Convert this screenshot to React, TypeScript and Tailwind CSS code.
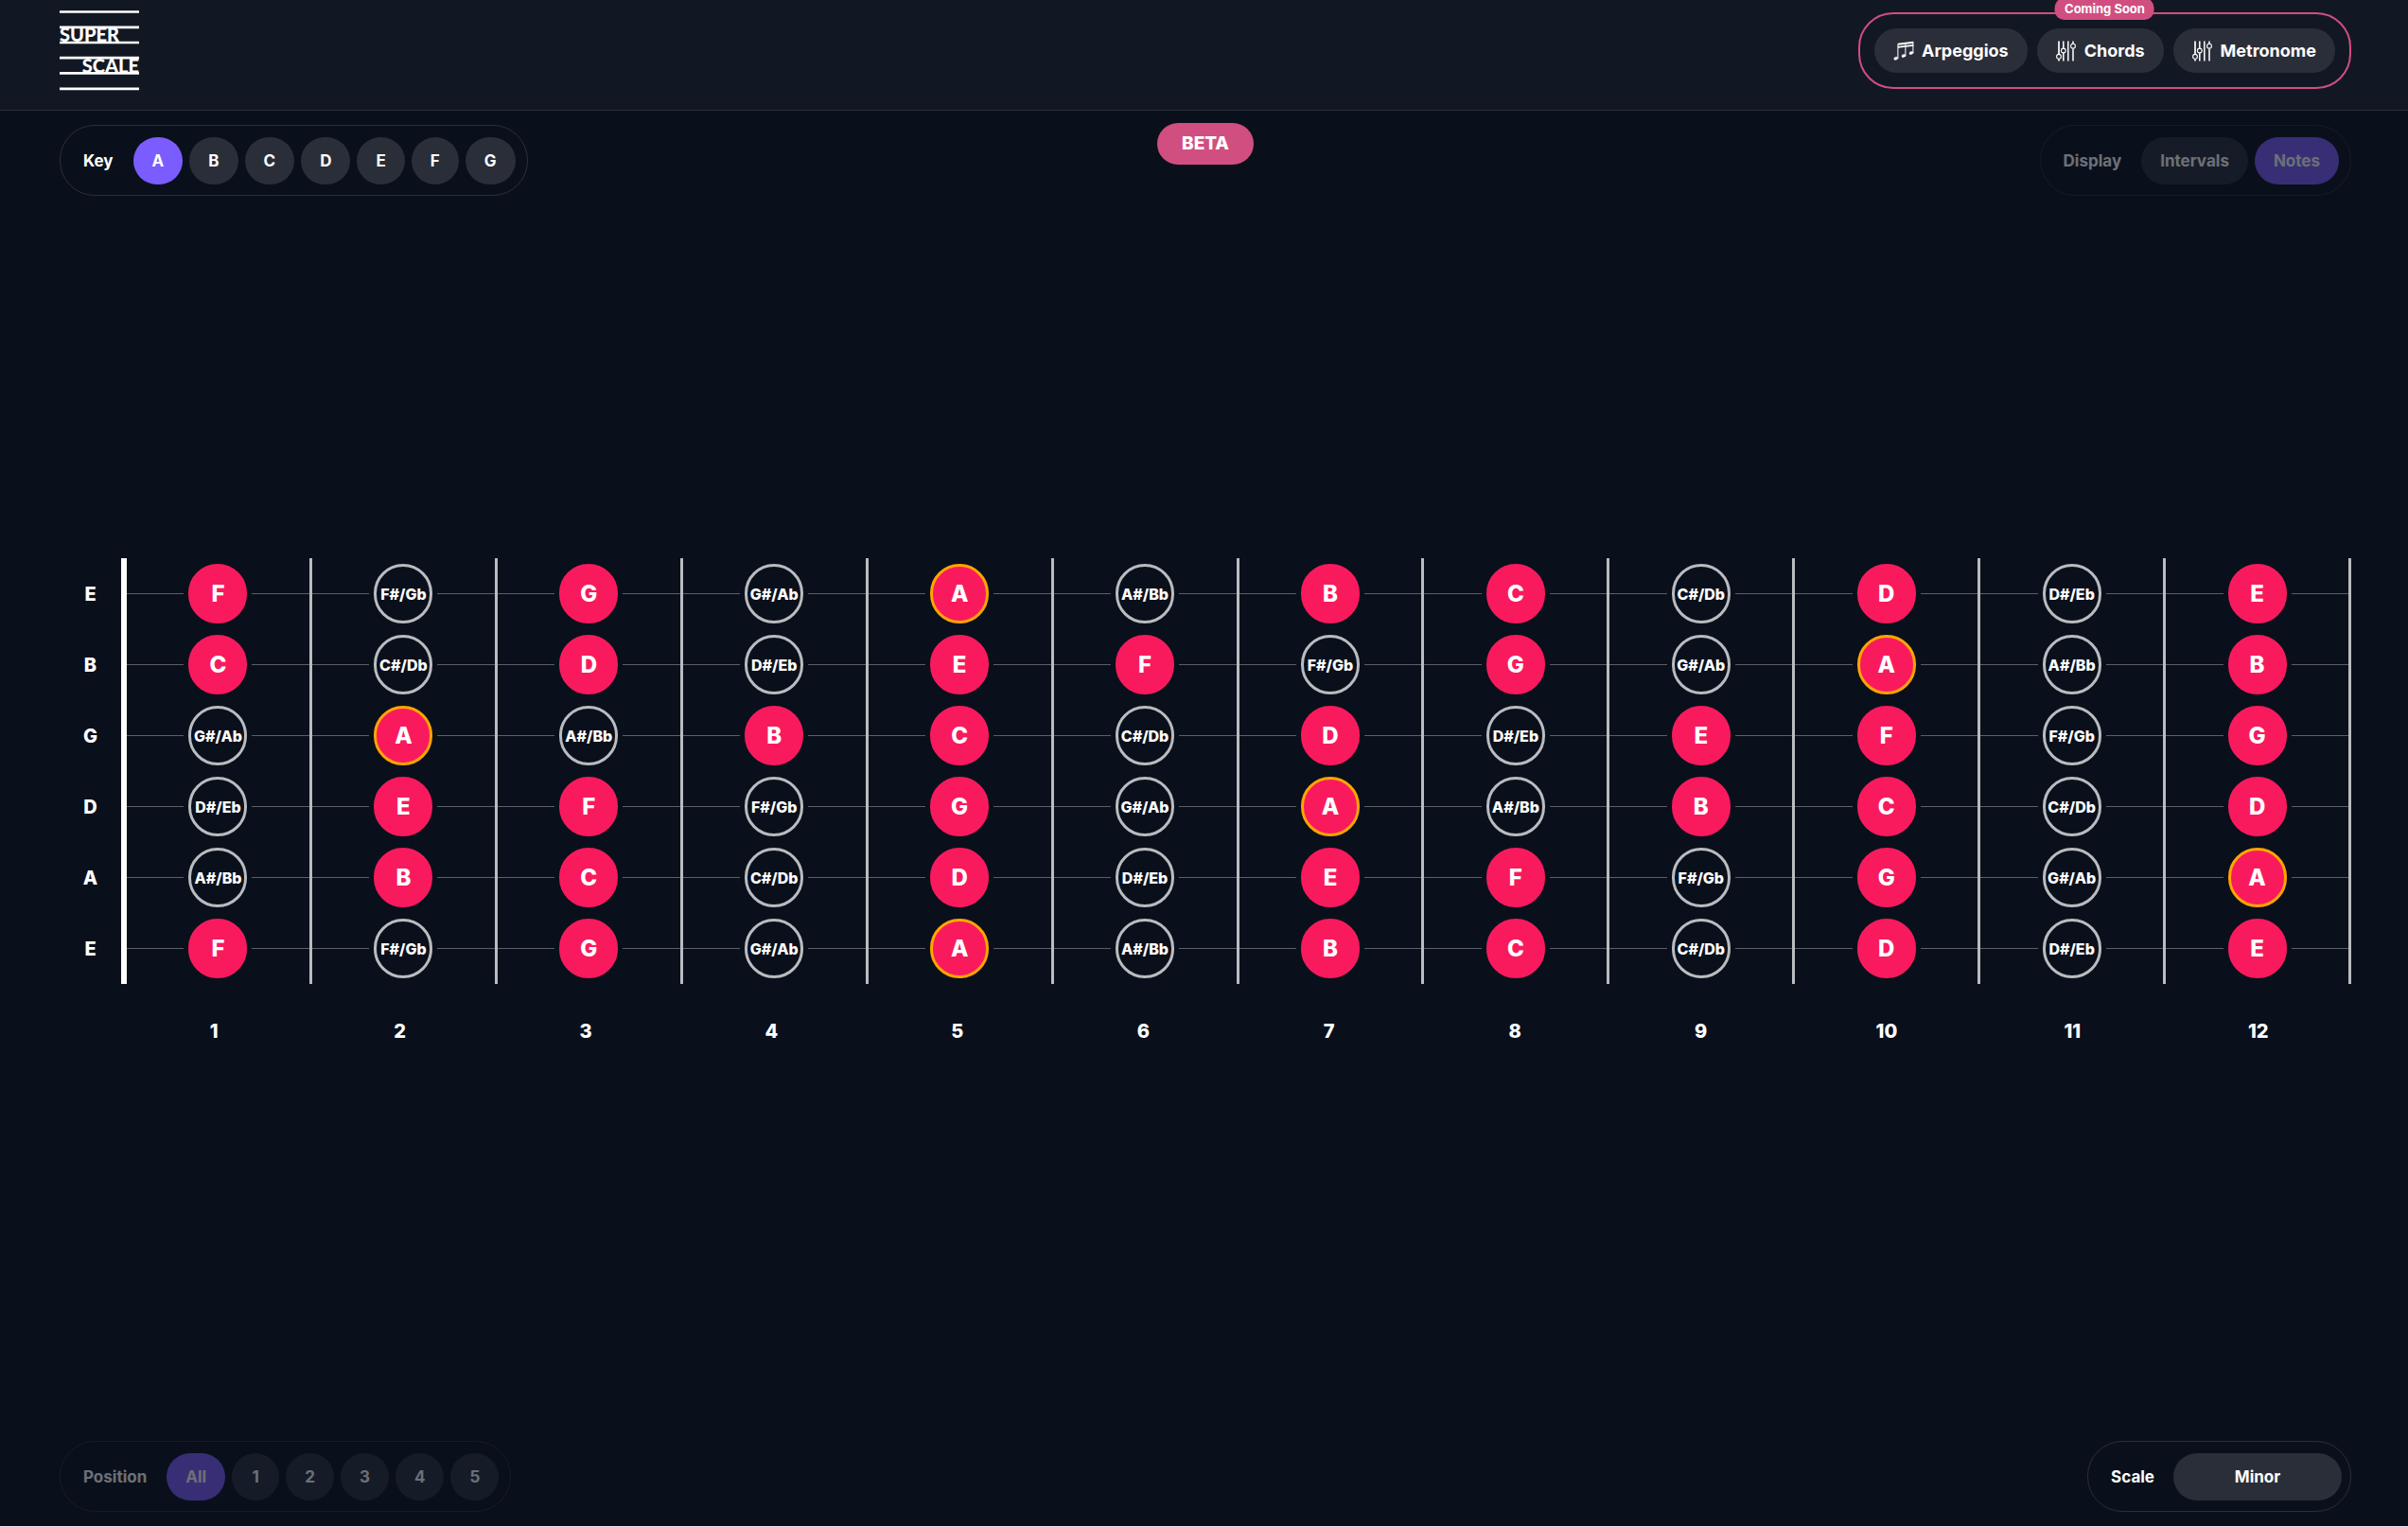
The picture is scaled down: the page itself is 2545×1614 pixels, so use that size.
import type { ReactNode } from "react";

const KEYS = ["A", "B", "C", "D", "E", "F", "G"];
const POSITIONS = ["All", "1", "2", "3", "4", "5"];
const STRINGS = ["E", "B", "G", "D", "A", "E"];
const CHROMATIC = ["C", "C#/Db", "D", "D#/Eb", "E", "F", "F#/Gb", "G", "G#/Ab", "A", "A#/Bb", "B"];
const FRETS = Array.from({ length: 12 }, (_, i) => i + 1);

function noteAt(open: string, fret: number) {
  return CHROMATIC[(CHROMATIC.indexOf(open) + fret) % 12];
}

function Logo() {
  return (
    <svg width="84" height="85" viewBox="0 0 84 85" role="img" aria-label="Super Scale" className="text-white">
      {[1.5, 17.8, 34, 50.2, 66.4, 82.8].map((y) => (
        <line key={y} x1="0" x2="84" y1={y} y2={y} stroke="currentColor" strokeWidth="2.7" />
      ))}
      <text x="0" y="33" fill="currentColor" className="font-['Lato',sans-serif] text-xl font-black">SUPER</text>
      <text x="84" y="66" textAnchor="end" fill="currentColor" className="font-['Lato',sans-serif] text-xl font-black">SCALE</text>
    </svg>
  );
}

function NotesIcon() {
  return (
    <svg width="22" height="22" viewBox="0 0 22 22" aria-hidden="true" fill="currentColor" stroke="currentColor">
      <path d="M4.9 19V3.6M12.9 16.5V3M20.9 13.5V1.6" fill="none" strokeWidth="1" />
      <path d="M4.9 3.8 21.3 1.8M4.9 6.9 21.3 4.9" fill="none" strokeWidth="1.9" />
      <ellipse cx="2.7" cy="18.8" rx="2" ry="1.4" transform="rotate(-20 2.7 18.8)" strokeWidth=".5" />
      <ellipse cx="10.9" cy="16" rx="2" ry="1.4" transform="rotate(-20 10.9 16)" strokeWidth=".5" />
      <ellipse cx="18.9" cy="13" rx="2" ry="1.4" transform="rotate(-20 18.9 13)" strokeWidth=".5" />
    </svg>
  );
}

function SlidersIcon() {
  return (
    <svg width="22" height="22" viewBox="0 0 22 22" aria-hidden="true" fill="none" stroke="currentColor">
      <path d="M3 .5V14M3 19.5V21.5" strokeWidth="2" opacity=".85" />
      <path d="M7.8 .5V8M7.8 13V21.5M12.8 .5V21.5M18 .5V3M18 8.5V21.5" strokeWidth="1.5" />
      <circle cx="3" cy="16.8" r="2.4" strokeWidth="1.1" />
      <circle cx="7.8" cy="10.5" r="2.4" strokeWidth="1.1" />
      <circle cx="18" cy="5.7" r="2.4" strokeWidth="1.1" />
    </svg>
  );
}

function ToolButton({ icon, label }: { icon: ReactNode; label: string }) {
  return (
    <button type="button" className="flex h-[47px] items-center gap-2 rounded-full bg-[#2a2e39] px-5">
      {icon}
      {label}
    </button>
  );
}

function Group({ label, dim = false, children }: { label: string; dim?: boolean; children: ReactNode }) {
  return (
    <div
      role="group"
      aria-label={label}
      className={
        "flex w-fit items-center gap-[7px] rounded-[37px] border border-[#2a2e39] pt-3 pr-3 pb-[11px] pl-6 " +
        (dim ? "opacity-40" : "")
      }
    >
      <span className="mr-[14px]">{label}</span>
      {children}
    </div>
  );
}

function Pill({ active = false, children }: { active?: boolean; children: ReactNode }) {
  return (
    <button
      type="button"
      aria-pressed={active}
      className={"h-[50px] min-w-[50px] rounded-[25px] px-5 " + (active ? "bg-[#7b5cff]" : "bg-[#2a2e39]")}
    >
      {children}
    </button>
  );
}

function Note({ name }: { name: string }) {
  const sharp = name.length > 1;
  const look = sharp
    ? "border-[#b9bcc0] text-base"
    : name === "A"
      ? "border-[#ffa500] bg-[#f91a5e] text-2xl"
      : "border-[#f91a5e] bg-[#f91a5e] text-2xl";
  return (
    <span className="bg-[#0a101b] px-[5px]">
      <span className={"flex h-[63px] w-[62px] items-center justify-center rounded-full border-3 font-extrabold " + look}>
        {name}
      </span>
    </span>
  );
}

function Fretboard() {
  return (
    <div className="flex flex-col">
      <div className="flex">
        <div className="flex w-[65px] flex-col text-xl font-extrabold">
          {STRINGS.map((s, i) => (
            <span key={i} className="flex h-[75px] items-center justify-center">{s}</span>
          ))}
        </div>
        <div className="grid grow grid-cols-12 border-l-6 border-white">
          {FRETS.map((fret) => (
            <div key={fret} className="flex flex-col border-r-3 border-[#b9bcc0]">
              {STRINGS.map((s, i) => (
                <div key={i} className="flex h-[75px] items-center">
                  <span className="h-px grow bg-[#5b5f67]" />
                  <Note name={noteAt(s, fret)} />
                  <span className="h-px grow bg-[#5b5f67]" />
                </div>
              ))}
            </div>
          ))}
        </div>
      </div>
      <div className="ml-[65px] grid h-[100px] grid-cols-12 items-center text-center text-xl font-extrabold">
        {FRETS.map((fret) => (
          <span key={fret}>{fret}</span>
        ))}
      </div>
    </div>
  );
}

export default function App() {
  return (
    <div className="flex min-h-screen flex-col border-b border-[#ede6ef] bg-[#0a101b] font-['Inter',sans-serif] text-[17px] leading-6 font-bold text-white">
      <header className="flex items-center justify-between border-b border-[#2a2e39] bg-[#121823] pt-[11px] pr-[60px] pb-5 pl-[63px] text-lg">
        <a href="#home">
          <Logo />
        </a>
        <nav className="relative flex gap-[10px] rounded-[37px] border-2 border-[#d14e80] p-[15px]">
          <span className="absolute -top-[17px] left-1/2 flex h-[23px] -translate-x-1/2 items-center rounded-[10px] bg-[#d14e80] px-[10px] text-[13px] whitespace-nowrap">
            Coming Soon
          </span>
          <ToolButton icon={<NotesIcon />} label="Arpeggios" />
          <ToolButton icon={<SlidersIcon />} label="Chords" />
          <ToolButton icon={<SlidersIcon />} label="Metronome" />
        </nav>
      </header>

      <main className="flex grow flex-col justify-between pt-[13px] pr-[60px] pb-[15px] pl-[63px]">
        <div className="grid grid-cols-[1fr_auto_1fr] items-end">
          <Group label="Key">
            {KEYS.map((k) => (
              <Pill key={k} active={k === "A"}>{k}</Pill>
            ))}
          </Group>
          <span className="mb-[33px] flex h-[44px] items-center rounded-full bg-[#d14e80] px-[26px] text-[19px] font-extrabold">
            BETA
          </span>
          <div className="flex justify-end">
            <Group label="Display" dim>
              <Pill>Intervals</Pill>
              <Pill active>Notes</Pill>
            </Group>
          </div>
        </div>

        <Fretboard />

        <div className="flex items-end justify-between">
          <Group label="Position" dim>
            {POSITIONS.map((p) => (
              <Pill key={p} active={p === "All"}>{p}</Pill>
            ))}
          </Group>
          <div className="flex items-center gap-5 rounded-[37px] border border-[#2a2e39] pt-3 pr-[9px] pb-[11px] pl-6">
            <label htmlFor="scale">Scale</label>
            <select
              id="scale"
              defaultValue="Minor"
              className="h-[50px] w-[178px] appearance-none rounded-[25px] bg-[#2a2e39] text-center"
            >
              <option>Minor</option>
              <option>Major</option>
            </select>
          </div>
        </div>
      </main>
    </div>
  );
}
